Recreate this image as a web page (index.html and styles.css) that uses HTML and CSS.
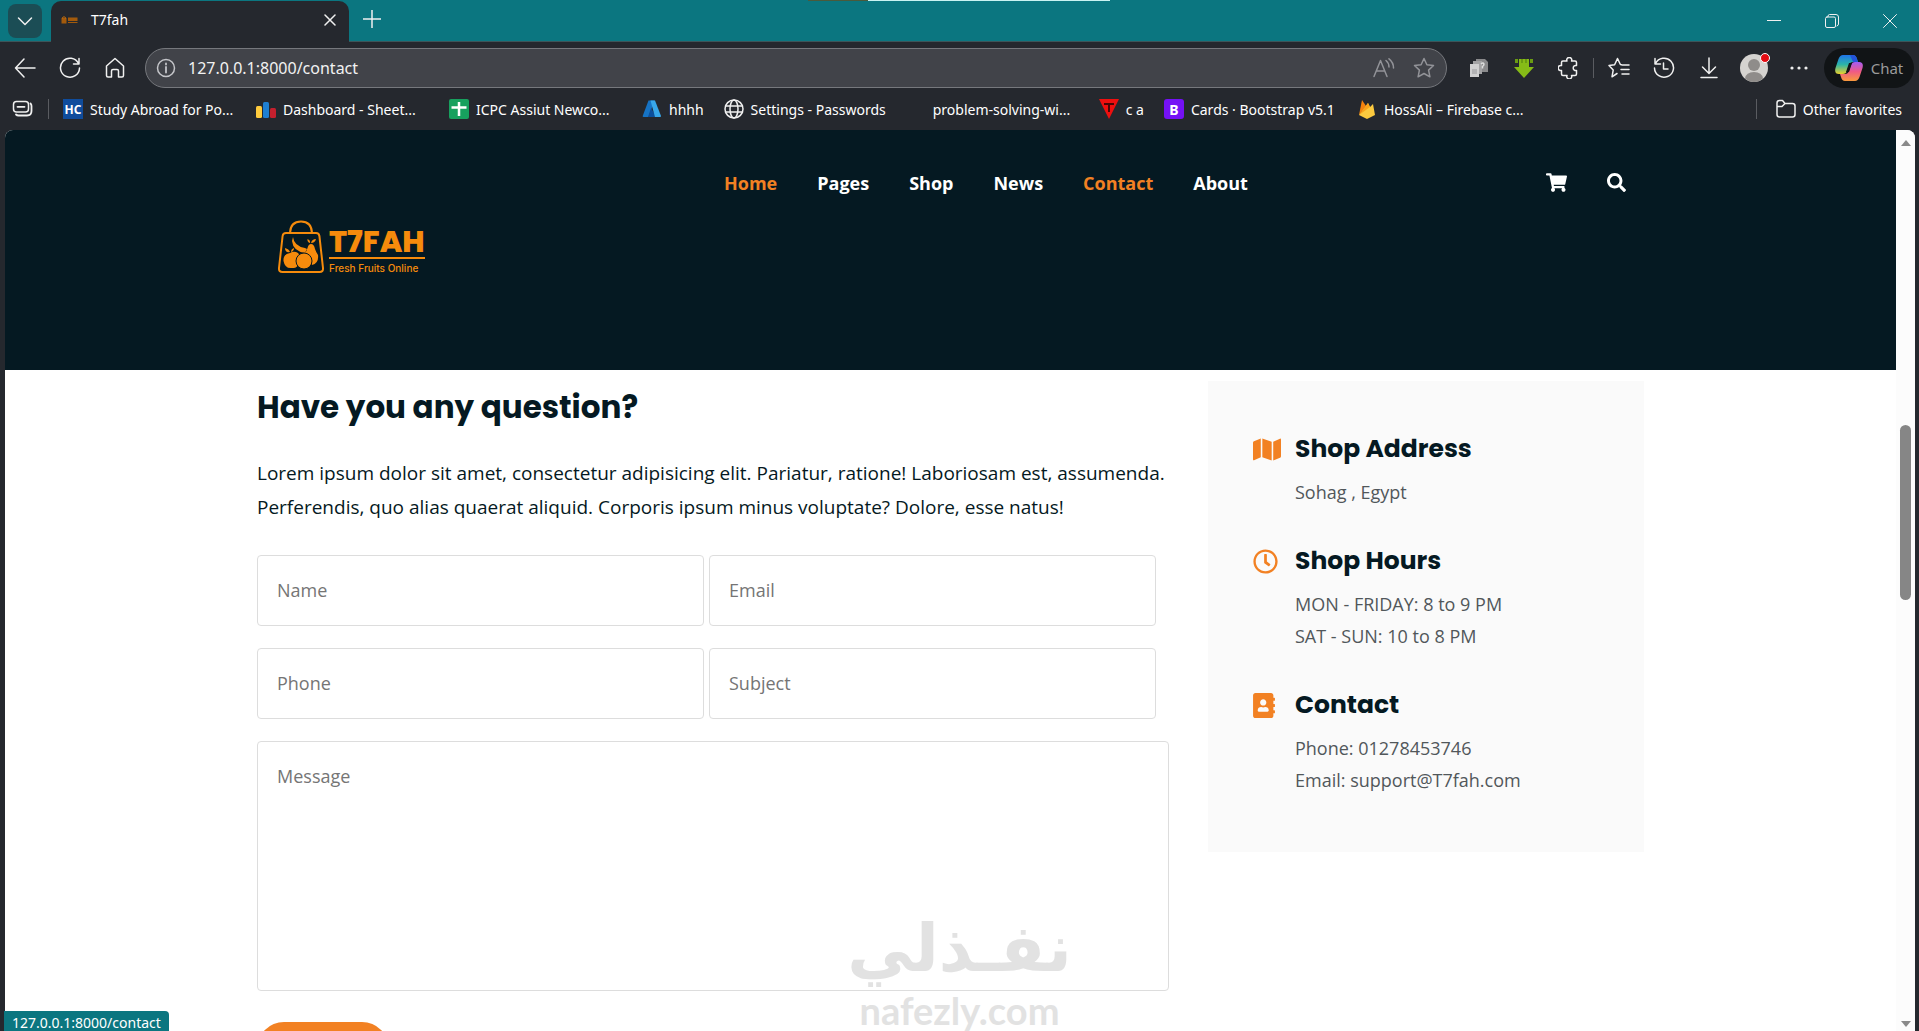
FILE: index.html
```
<!DOCTYPE html>
<html lang="en">
<head>
    <meta charset="UTF-8">
    <meta name="viewport" content="width=device-width, initial-scale=1.0">
    <title>T7fah</title>
    <link rel="stylesheet" href="styles.css">
</head>
<body>
    <!-- title bar -->
    <div class="titlebar">
        <span class="drag-strip"></span>
        <button class="tab-menu" aria-label="Tab actions">
            <svg width="16" height="16" viewBox="0 0 16 16" class="line"><path d="M1.500 5 8 11.500 14.500 5"/></svg>
        </button>
        <div class="tab">
            <svg width="17" height="8" viewBox="0 0 34 16" class="favicon">
                <path d="M1 4h10v11H1z" fill="#a35a0c"/>
                <path d="M3 5V3q3-3 6 0v2" fill="none" stroke="#c96f0b" stroke-width="2"/>
                <path d="M14 3h19v7H14zM14 12h19v2H14z" fill="#a35a0c"/>
            </svg>
            <span class="tab-title">T7fah</span>
            <button class="tab-close" aria-label="Close tab">
                <svg width="12" height="12" viewBox="0 0 12 12" class="line"><path d="M1 1l10 10M11 1 1 11"/></svg>
            </button>
        </div>
        <button class="new-tab" aria-label="New tab">
            <svg width="18" height="18" viewBox="0 0 18 18" class="line"><path d="M9 0v18M0 9h18"/></svg>
        </button>
        <div class="window-buttons">
            <button aria-label="Minimize"><svg width="14" height="14" viewBox="0 0 14 14" class="line thin"><path d="M0 6.500h14"/></svg></button>
            <button aria-label="Restore"><svg width="14" height="14" viewBox="0 0 14 14" class="line thin"><rect x=".5" y="3" width="10" height="10.500" rx="1.500"/><path d="M3 2.500V2Q3.200.6 4.500.5H11Q13.500.6 13.500 3v7q0 1.500-1.500 2"/></svg></button>
            <button aria-label="Close"><svg width="14" height="14" viewBox="0 0 14 14" class="line thin"><path d="M.5.5l13 13M13.500.5l-13 13"/></svg></button>
        </div>
    </div>

    <!-- toolbar -->
    <div class="toolbar">
        <button aria-label="Back"><svg width="22" height="22" viewBox="0 0 22 22" class="line"><path d="M21 11H1.500M10 2 1.500 11l8.500 9"/></svg></button>
        <button aria-label="Refresh"><svg width="22" height="22" viewBox="0 0 22 22" class="line"><path d="M19.500 6.500A9.500 9.500 0 1 0 20.500 11M20 1.500v5.500h-5.500"/></svg></button>
        <button aria-label="Home"><svg width="20" height="22" viewBox="0 0 20 22" class="line"><path d="M10 1.500 1.500 9v9.500Q1.500 20 3 20h3.500v-6q0-1.500 1.500-1.500h4q1.500 0 1.500 1.500v6H17q1.500 0 1.500-1.500V9z"/></svg></button>

        <div class="address">
            <svg width="20" height="20" viewBox="0 0 20 20" class="line soft"><circle cx="10" cy="10" r="8.500"/><path d="M10 9v5.500M10 5.500v1" stroke-width="1.800"/></svg>
            <input type="text" class="url" value="127.0.0.1:8000/contact" aria-label="Address">
            <svg width="22" height="20" viewBox="0 0 22 20" class="line dim"><path d="M1 18.500 7.500 2.500 14 18.500M3.500 13h8M13 2.500q3 2.500 3 6.500M16 .8q4.500 3.500 4.500 9.200"/></svg>
            <svg width="22" height="22" viewBox="0 0 22 22" class="line dim"><path d="M11 1.500l2.900 6.200 6.600.8-4.900 4.600 1.300 6.700L11 16.500l-5.900 3.300 1.300-6.700L1.500 8.500l6.600-.8z"/></svg>
        </div>

        <div class="extensions">
            <button aria-label="Copy"><svg width="20" height="20" viewBox="0 0 20 20"><path d="M7 1h9l3 3v10H7z" fill="#8a8a8c"/><path d="M4 3h9v13H4z" fill="#a3a3a5"/><path d="M1 6h9v13H1z" fill="#d0d0d1"/><path d="M3 11h5v5H3z" fill="#b3b3b5"/><path d="M12 6q2-2 3 0 0 1.500-1.500 2.500v2" stroke="#ddd" stroke-width="1.500" fill="none"/></svg></button>
            <button aria-label="Download manager"><svg width="20" height="20" viewBox="0 0 20 20"><path d="M5 1h10v8h5L10 20 0 9h5z" fill="#86bb17"/><path d="M1 1h3v4H1zM16 1h3v4h-3zM7 1h2v4H7zM11 1h2v4h-2z" fill="#6a9c12"/></svg></button>
            <button aria-label="Extensions"><svg width="22" height="22" viewBox="0 0 22 22" class="line"><path d="M5 4h4a2.500 2.500 0 1 1 4.500 0H17q1.500 0 1.500 1.500V8.500a2.600 2.600 0 1 0 0 5V17q0 1.500-1.500 1.500h-3.500a2.500 2.500 0 1 1-4.500 0H5q-1.500 0-1.500-1.500v-3.500a2.600 2.600 0 1 1 0-5V5.500Q3.500 4 5 4z"/></svg></button>
        </div>
        <span class="divider"></span>
        <div class="tools">
            <button aria-label="Favorites"><svg width="22" height="22" viewBox="0 0 22 22" class="line"><path d="M13.500 7.700 12.400 7.500 9.500 1.500 6.600 7.700 1 8.500l4.200 4.600L4 19.800l5-3.300M14 8h7M13 12.500h8M14 17h7"/></svg></button>
            <button aria-label="History"><svg width="22" height="22" viewBox="0 0 22 22" class="line"><path d="M2.500 6.500A9.500 9.500 0 1 1 1.500 11M2 1.500v5.500h5.500M10.500 6v6H15"/></svg></button>
            <button aria-label="Downloads"><svg width="22" height="22" viewBox="0 0 22 22" class="line"><path d="M11 1v15M4.500 10l6.500 6.500 6.500-6.500M3 20.500h16"/></svg></button>
            <button class="avatar" aria-label="Profile"><svg width="28" height="28" viewBox="0 0 28 28"><circle cx="14" cy="14" r="14" fill="#d5d3d0"/><circle cx="14" cy="11" r="6" fill="#8f8c8a"/><path d="M5 24.500q1-6.500 9-6.500t9 6.500Q19 28 14 28t-9-3.500z" fill="#8f8c8a"/></svg><span class="alert-dot"></span></button>
            <button aria-label="Settings and more"><svg width="20" height="4" viewBox="0 0 20 4" fill="#eee"><circle cx="3" cy="2" r="1.600"/><circle cx="10" cy="2" r="1.600"/><circle cx="17" cy="2" r="1.600"/></svg></button>
        </div>
        <button class="chat">
            <svg width="28" height="28" viewBox="0 0 28 28">
                <defs>
                    <linearGradient id="cool" x1="0" y1="0" x2="0" y2="1"><stop offset="0" stop-color="#1f74ea"/><stop offset=".5" stop-color="#2bb5a8"/><stop offset="1" stop-color="#e9d02c"/></linearGradient>
                    <linearGradient id="warm" x1="0" y1="0" x2="0" y2="1"><stop offset="0" stop-color="#a45cf5"/><stop offset=".5" stop-color="#f05a86"/><stop offset="1" stop-color="#f99a3c"/></linearGradient>
                </defs>
                <path d="M8 1h10q3 0 4 4l1 3h-5q-3 0-4 3l-2 6q-1 3-4 3H4q-5 0-3.500-6L3.500 5Q5 1 8 1z" fill="url(#cool)"/>
                <path d="M20 27H10q-3 0-4-4l-1-3h5q3 0 4-3l2-6q1-3 4-3h4q5 0 3.500 6l-3 9Q23 27 20 27z" fill="url(#warm)"/>
                <path d="M15 1h3q3 0 4 4l1 3h-5z" fill="#2454d8"/>
                <path d="M14 9l-3 9h3l3-9z" fill="#111416"/>
            </svg>
            Chat
        </button>
    </div>

    <!-- favorites bar -->
    <div class="bookmarks">
        <button class="collections" aria-label="Tab groups"><svg width="21" height="18" viewBox="0 0 21 18" class="line"><rect x="1.500" y="1.500" width="15" height="10.500" rx="3"/><path d="M5.500 6.800h7M4 14.500q1 1 2.500 1H15q4.500 0 4.500-4.500V6q0-1.500-1-2.500" stroke-width="1.800"/></svg></button>
        <span class="divider"></span>
        <a class="bookmark wide" href="#"><span class="mark hc">HC</span>Study Abroad for Po...</a>
        <a class="bookmark wide" href="#"><svg width="20" height="20" viewBox="0 0 20 20"><rect x="0" y="7" width="6" height="12" rx="1.500" fill="#ffcb3d"/><rect x="7" y="3" width="6" height="16" rx="1.500" fill="#1f7fd0"/><rect x="14" y="9" width="6" height="10" rx="1.500" fill="#c4202e"/></svg>Dashboard - Sheet...</a>
        <a class="bookmark wide" href="#"><svg width="20" height="20" viewBox="0 0 20 20"><rect width="20" height="20" rx="2" fill="#17a05e"/><path d="M10 3v14M2.500 8.500h15" stroke="#fff" stroke-width="2.500"/></svg>ICPC Assiut Newco...</a>
        <a class="bookmark" href="#"><svg width="20" height="20" viewBox="0 0 20 20"><path d="M6.500 1.500h6L6.500 18H1.500q-1 0-.8-1z" fill="#1673c4"/><path d="M9 9l5.500 9H6z" fill="#0c4f9c"/><path d="M8.500 1.500h4.500L19 17q.2 1-1 1h-5z" fill="#38a7ea"/></svg>hhhh</a>
        <a class="bookmark" href="#"><svg width="20" height="20" viewBox="0 0 20 20" class="line"><circle cx="10" cy="10" r="9"/><ellipse cx="10" cy="10" rx="4" ry="9"/><path d="M1.500 7h17M1.500 13h17"/></svg>Settings - Passwords</a>
        <a class="bookmark wide" href="#"><span class="mark"></span>problem-solving-wi...</a>
        <a class="bookmark" href="#"><svg width="20" height="20" viewBox="0 0 20 20"><path d="M0 0h20L10 20z" fill="#ee0f0f"/><path d="M5 5h10M10 5v8" stroke="#4a0606" stroke-width="2"/></svg>c a</a>
        <a class="bookmark wide" href="#"><span class="mark bs">B</span>Cards · Bootstrap v5.1</a>
        <a class="bookmark wide" href="#"><svg width="20" height="20" viewBox="0 0 20 20"><path d="M2 16 5 1l4 6z" fill="#f5820d"/><path d="M2 16 11 4l2 4 3-3 2 11-8 4z" fill="#fcca3f"/><path d="M2 16 11 4l2 4z" fill="#fba41b"/></svg>HossAli – Firebase c...</a>
        <span class="divider push"></span>
        <a class="bookmark other" href="#"><svg width="20" height="20" viewBox="0 0 20 20" class="line"><path d="M1 15.500V4q0-2.500 2.500-2.500h3l2.500 3H16.500q2.500 0 2.500 2.500v8.500q0 2.500-2.500 2.500h-13Q1 18 1 15.500zM1 7.500h5l3-3"/></svg>Other favorites</a>
    </div>

    <!-- page -->
    <div class="viewport">
        <div class="page">
            <header class="site-header">
                <div class="container header-grid">
                    <a class="logo" href="#">
                        <svg width="48" height="54" viewBox="0 0 48 54">
                            <g fill="none" stroke="#f68b0c" stroke-width="2">
                                <path d="M9 13h30q3 0 3.400 3L46 48q.4 4-3.500 4h-37Q1.600 52 2 48L5.600 16Q6 13 9 13z"/>
                                <path d="M13 13Q13.500 1.500 24 1.500T35 13"/>
                            </g>
                            <g fill="#f68b0c">
                                <path d="M13 33q4-2.500 8 0 3 3 1.500 8-1.500 7-5.500 7t-2 0Q8 49 6.500 41 6 34 13 33z"/>
                                <path d="M13 32q-1-3-5-4 0 5 5 4zm1 0q0-3 3-4 0 3-3 4z"/>
                                <path d="M16 17q1 9 12 11l2 1-2 4q-12-2-13-12z"/>
                                <path d="M34 24q3 0 4 5 1 3 3 6 1 8-6 10-1-10-8-11 3-3 3.500-6 1-4 3.500-4z"/>
                                <path d="M33 23q-3-1-2.500-4 3 1 2.500 4zm1 0q1-4 5-4-1 4-5 4z"/>
                                <circle cx="27" cy="41" r="8" stroke="#051922"/>
                            </g>
                        </svg>
                        <span class="logo-text">
                            <strong>T7FAH</strong>
                            <small>Fresh Fruits Online</small>
                        </span>
                    </a>
                    <nav class="main-menu">
                        <a class="active" href="#">Home</a>
                        <a href="#">Pages</a>
                        <a href="#">Shop</a>
                        <a href="#">News</a>
                        <a class="active" href="#">Contact</a>
                        <a href="#">About</a>
                    </nav>
                    <div class="header-icons">
                        <a href="#" aria-label="Cart"><svg width="21" height="19" viewBox="0 0 576 512" fill="#fff"><path d="M528.12 301.319l47.273-208C578.806 78.301 567.391 64 551.99 64H159.208l-9.166-44.81C147.758 8.021 137.93 0 126.529 0H24C10.745 0 0 10.745 0 24v16c0 13.255 10.745 24 24 24h69.883l70.248 343.435C147.325 417.1 136 435.222 136 456c0 30.928 25.072 56 56 56s56-25.072 56-56c0-15.674-6.447-29.835-16.824-40h209.647C430.447 426.165 424 440.326 424 456c0 30.928 25.072 56 56 56s56-25.072 56-56c0-22.172-12.888-41.332-31.579-50.405l5.517-24.276c3.413-15.018-8.002-29.319-23.403-29.319H218.117l-6.545-32h293.145c11.206 0 20.92-7.754 23.403-18.681z"/></svg></a>
                        <a href="#" aria-label="Search"><svg width="19" height="19" viewBox="0 0 512 512" fill="#fff"><path d="M505 442.7L405.3 343c-4.500-4.500-10.600-7-17-7H372c27.600-35.300 44-79.700 44-128C416 93.100 322.900 0 208 0S0 93.100 0 208s93.100 208 208 208c48.300 0 92.700-16.400 128-44v16.300c0 6.400 2.500 12.500 7 17l99.700 99.700c9.400 9.400 24.600 9.400 33.900 0l28.300-28.300c9.400-9.400 9.400-24.600.1-34zM208 336c-70.700 0-128-57.200-128-128 0-70.700 57.200-128 128-128 70.700 0 128 57.200 128 128 0 70.700-57.200 128-128 128z"/></svg></a>
                    </div>
                </div>
            </header>

            <main class="container contact-grid">
                <section class="contact-form">
                    <h2>Have you any question?</h2>
                    <p class="intro">Lorem ipsum dolor sit amet, consectetur adipisicing elit. Pariatur, ratione! Laboriosam est, assumenda. Perferendis, quo alias quaerat aliquid. Corporis ipsum minus voluptate? Dolore, esse natus!</p>
                    <form>
                        <div class="fields">
                            <input type="text" placeholder="Name" name="name" aria-label="Name">
                            <input type="email" placeholder="Email" name="email" aria-label="Email">
                            <input type="tel" placeholder="Phone" name="phone" aria-label="Phone">
                            <input type="text" placeholder="Subject" name="subject" aria-label="Subject">
                        </div>
                        <textarea placeholder="Message" name="message" aria-label="Message"></textarea>
                        <button type="submit" class="submit">Submit</button>
                    </form>
                </section>

                <aside class="shop-info">
                    <div class="info-box">
                        <svg width="28" height="25" viewBox="0 0 576 512" fill="#f28123"><path d="M0 117.660v346.320c0 11.320 11.430 19.060 21.940 14.860L160 416V32L20.120 87.950A32.006 32.006 0 0 0 0 117.660zM192 416l192 64V96L192 32v384zM554.060 33.160L416 96v384l139.880-55.950A31.996 31.996 0 0 0 576 394.340V48.020c0-11.320-11.430-19.060-21.940-14.860z"/></svg>
                        <h4>Shop Address</h4>
                        <p>Sohag , Egypt</p>
                    </div>
                    <div class="info-box">
                        <svg width="25" height="25" viewBox="0 0 512 512" fill="#f28123"><path d="M256 8C119 8 8 119 8 256s111 248 248 248 248-111 248-248S393 8 256 8zm0 448c-110.500 0-200-89.500-200-200S145.500 56 256 56s200 89.500 200 200-89.500 200-200 200zm61.800-104.400l-84.900-61.700c-3.100-2.300-4.900-5.900-4.900-9.700V116c0-6.600 5.400-12 12-12h32c6.600 0 12 5.400 12 12v141.700l66.800 48.600c5.400 3.900 6.500 11.400 2.600 16.800L334.600 349c-3.900 5.300-11.400 6.500-16.800 2.600z"/></svg>
                        <h4>Shop Hours</h4>
                        <p>MON - FRIDAY: 8 to 9 PM<br>SAT - SUN: 10 to 8 PM</p>
                    </div>
                    <div class="info-box">
                        <svg width="22" height="25" viewBox="0 0 448 512" fill="#f28123"><path d="M436 160c6.600 0 12-5.400 12-12v-40c0-6.600-5.400-12-12-12h-20V48c0-26.500-21.500-48-48-48H48C21.500 0 0 21.500 0 48v416c0 26.500 21.500 48 48 48h320c26.500 0 48-21.500 48-48v-48h20c6.600 0 12-5.400 12-12v-40c0-6.600-5.400-12-12-12h-20v-64h20c6.600 0 12-5.400 12-12v-40c0-6.600-5.400-12-12-12h-20v-64h20zm-228-32c35.300 0 64 28.700 64 64s-28.700 64-64 64-64-28.700-64-64 28.700-64 64-64zm112 236.800c0 10.600-10 19.200-22.400 19.200H118.400C106 384 96 375.400 96 364.800v-19.200c0-31.800 30.100-57.600 67.200-57.600h5c12.300 5.100 25.700 8 39.800 8s27.600-2.900 39.800-8h5c37.100 0 67.200 25.800 67.200 57.600v19.200z"/></svg>
                        <h4>Contact</h4>
                        <p>Phone: 01278453746<br>Email: support@T7fah.com</p>
                    </div>
                </aside>
            </main>
        </div>
        <div class="scrollbar">
            <svg width="10" height="6" viewBox="0 0 10 6" fill="#8a8a8a"><path d="M5 0l5 6H0z"/></svg>
            <div class="track"><div class="thumb"></div></div>
            <svg width="10" height="6" viewBox="0 0 10 6" fill="#8a8a8a"><path d="M0 0h10L5 6z"/></svg>
        </div>
    </div>

    <div class="watermark">
        <span class="watermark-ar" lang="ar" dir="rtl">نفـذلي</span>
        <span class="watermark-en">nafezly.com</span>
    </div>
    <div class="status">127.0.0.1:8000/contact</div>
</body>
</html>
```

FILE: styles.css
```
* {
    box-sizing: border-box;
}
body {
    margin: 0;
    height: 100vh;
    display: flex;
    flex-direction: column;
    position: relative;
    overflow: hidden;
    background: #25282e;
    font-family: "Segoe UI", "Noto Sans", sans-serif;
    font-size: 14px;
    color: #fff;
}
button {
    display: flex;
    align-items: center;
    justify-content: center;
    padding: 0;
    border: none;
    background: none;
    color: inherit;
    font: inherit;
    cursor: pointer;
}
a {
    color: inherit;
    text-decoration: none;
}
svg {
    display: block;
    flex: none;
}
.line {
    fill: none;
    stroke: #f0f0f0;
    stroke-width: 1.5;
    stroke-linecap: round;
    stroke-linejoin: round;
}
.thin {
    stroke-width: 1;
}
.soft {
    stroke: #c4c5c9;
}
.dim {
    stroke: #929398;
}

/* title bar */
.titlebar {
    display: flex;
    height: 42px;
    flex: none;
    background: #0b7680;
    border-bottom: 1px solid #3d5559;
}
.drag-strip {
    position: absolute;
    top: 0;
    left: 808px;
    width: 302px;
    height: 1px;
    background: linear-gradient(90deg, #4a5a3c 20%, #c9f3f2 20%);
}
.tab-menu {
    width: 34px;
    height: 34px;
    margin: 4px 9px 0 8px;
    border-radius: 8px;
    background: #1b4d55;
}
.tab {
    display: flex;
    align-items: center;
    width: 298px;
    height: 41px;
    margin-top: 1px;
    padding: 0 13px 4px 10px;
    border-radius: 10px 10px 0 0;
    background: #25282e;
}
.tab-title {
    flex: 1;
    margin-left: 13px;
}
.new-tab {
    width: 46px;
    height: 38px;
}
.window-buttons {
    display: flex;
    margin-left: auto;
}
.window-buttons button {
    width: 58px;
    height: 42px;
}

/* toolbar */
.toolbar {
    display: flex;
    align-items: center;
    flex: none;
    height: 52px;
    padding: 0 5px 0 2px;
    background: #25282e;
}
.toolbar button {
    width: 45px;
    height: 40px;
}
.address {
    display: flex;
    align-items: center;
    flex: 1;
    gap: 18px;
    height: 40px;
    margin: 0 9px 0 8px;
    padding: 0 11px 0 10px;
    border: 1px solid #76787d;
    border-radius: 20px;
    background: #414349;
}
.url {
    flex: 1;
    min-width: 0;
    margin-left: -6px;
    padding: 0;
    border: none;
    outline: none;
    background: none;
    color: #f2f2f2;
    font-family: inherit;
    font-size: 16px;
}
.extensions {
    display: flex;
    margin-right: 2px;
}
.divider {
    width: 1px;
    height: 20px;
    background: #5a5c61;
}
.tools {
    display: flex;
    margin-left: 2px;
}
.toolbar .avatar {
    position: relative;
}
.alert-dot {
    position: absolute;
    top: 5px;
    right: 6px;
    width: 10px;
    height: 10px;
    border: 1px solid #fff;
    border-radius: 50%;
    background: #e30b12;
}
.toolbar .chat {
    gap: 8px;
    width: 90px;
    margin-left: 3px;
    border-radius: 20px;
    background: #111416;
    color: #9b9b9b;
    font-size: 15px;
}

/* favorites bar */
.bookmarks {
    display: flex;
    align-items: center;
    flex: none;
    height: 36px;
    padding: 0 17px 6px 12px;
    background: #25282e;
}
.collections {
    margin-right: 15px;
}
.bookmark {
    display: flex;
    align-items: center;
    gap: 7px;
    margin-right: 20px;
    white-space: nowrap;
}
.bookmark.wide {
    width: 173px;
}
.collections + .divider {
    margin-right: 14px;
}
.mark {
    display: flex;
    align-items: center;
    justify-content: center;
    flex: none;
    width: 20px;
    height: 20px;
    font-size: 12px;
    font-weight: 700;
}
.hc {
    background: #0f4c9c;
}
.bs {
    border-radius: 3px;
    background: #7411f5;
    font-size: 14px;
}
.push {
    margin-left: auto;
    margin-right: 19px;
}
.bookmark.other {
    margin-right: 0;
}

/* page */
.viewport {
    display: flex;
    flex: 1;
    min-height: 0;
    margin: 0 4px 0 5px;
    border-radius: 8px 8px 0 0;
    overflow: hidden;
    background: #fff;
    font-family: "Open Sans", sans-serif;
}
.page {
    flex: 1;
    overflow: hidden;
}
.container {
    max-width: 1387px;
    margin: 0 auto;
}
.site-header {
    height: 240px;
    background: #051922;
}
.header-grid {
    display: grid;
    grid-template-columns: 467px 1fr auto;
    align-items: start;
}
.logo {
    display: flex;
    gap: 4px;
    padding: 90px 0 0 20px;
    color: #f68b0c;
}
.logo-text {
    display: flex;
    flex-direction: column;
    align-items: flex-start;
    padding-top: 8px;
    font-family: "Poppins", "Inter", sans-serif;
}
.logo-text strong {
    padding-bottom: 1px;
    border-bottom: 2px solid #f68b0c;
    font-size: 30px;
    font-weight: 800;
    line-height: 28px;
}
.logo-text small {
    font-family: "Inter", sans-serif;
    font-size: 10px;
    font-weight: 500;
    line-height: 18px;
}
.main-menu {
    display: flex;
    gap: 40px;
    padding-top: 40px;
    font-size: 18px;
    font-weight: 700;
    line-height: 26px;
}
.main-menu .active {
    color: #f28123;
}
.header-icons {
    display: flex;
    gap: 40px;
    padding: 43px 18px 0 0;
}
.contact-grid {
    display: grid;
    grid-template-columns: 912px 1fr;
    gap: 39px;
    align-items: start;
    color: #051922;
}
h2,
h4 {
    margin: 0;
    font-family: "Poppins", "Inter", sans-serif;
    font-weight: 700;
}
h2 {
    padding-top: 16px;
    font-size: 31px;
    line-height: 42px;
}
.intro {
    margin: 28px 0 31px;
    font-size: 19px;
    line-height: 34px;
}
.fields {
    display: grid;
    grid-template-columns: 1fr 1fr;
    gap: 22px 5px;
    width: 899px;
    max-width: 100%;
}
.fields input,
.contact-form textarea {
    padding: 18px 19px 20px;
    border: 1px solid #ddd;
    border-radius: 4px;
    background: #fff;
    font-family: inherit;
    font-size: 18px;
}
.fields input {
    width: 100%;
    height: 71px;
}
.contact-form textarea {
    display: block;
    width: 100%;
    height: 250px;
    margin: 22px 0 31px;
    padding-top: 22px;
    resize: none;
}
.fields input::placeholder,
.contact-form textarea::placeholder {
    color: #757575;
}
.submit {
    padding: 15px 34px;
    border-radius: 50px;
    background: #f28123;
    color: #fff;
    font-size: 18px;
    font-weight: 700;
}
.shop-info {
    display: flex;
    flex-direction: column;
    gap: 33px;
    margin-top: 11px;
    padding: 48px 45px 56px;
    background: #fafafa;
}
.info-box {
    display: grid;
    grid-template-columns: 42px 1fr;
    align-items: center;
    row-gap: 7px;
}
.info-box h4 {
    font-size: 25px;
    line-height: 40px;
}
.info-box p {
    grid-column: 2;
    margin: 0;
    color: #51575a;
    font-size: 18px;
    line-height: 32px;
}

/* scrollbar */
.scrollbar {
    display: flex;
    flex-direction: column;
    align-items: center;
    flex: none;
    width: 19px;
    padding: 10px 0 4px;
    background: #fcfcfc;
}
.track {
    display: flex;
    flex-direction: column;
    flex: 1;
    padding-top: 279px;
}
.thumb {
    width: 11px;
    height: 175px;
    border-radius: 6px;
    background: #868686;
}

/* overlays */
.watermark {
    position: absolute;
    left: 50%;
    bottom: 0;
    width: 220px;
    margin-left: -110px;
    display: flex;
    flex-direction: column;
    align-items: center;
    color: #e2e2e2;
}
.watermark-ar {
    font-family: "DejaVu Sans", sans-serif;
    font-size: 66px;
    font-weight: 700;
    line-height: 80px;
}
.watermark-en {
    font-family: "Lato", sans-serif;
    font-size: 38px;
    font-weight: 700;
    line-height: 42px;
}
.status {
    position: absolute;
    left: 4px;
    bottom: 0;
    height: 20px;
    padding: 2px 8px 0;
    border-radius: 0 4px 0 0;
    background: #0b7680;
    font-size: 14px;
}
```
